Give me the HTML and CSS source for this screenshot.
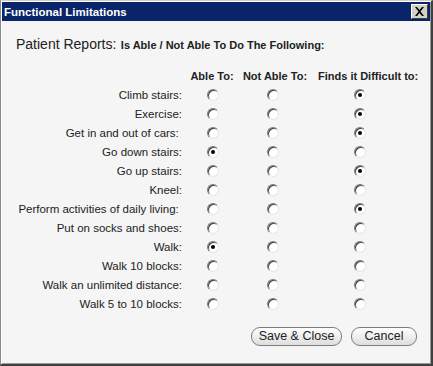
FILE: index.html
```html
<!DOCTYPE html>
<html>
<head>
<meta charset="utf-8">
<link rel="stylesheet" href="styles.css">
</head>
<body>
<div class="window">
  <div class="titlebar">
    <span class="title">Functional Limitations</span>
    <span class="close">
      <svg width="11" height="9" viewBox="0 0 11 9"><path d="M1 0h2l2.5 3 2.5-3h2l-3.5 4.5 3.5 4.5h-2l-2.5-3-2.5 3h-2l3.5-4.5z" fill="#000"/></svg>
    </span>
  </div>
  <div class="content">
    <div class="heading"><span class="big">Patient Reports:</span> <span class="small">Is Able / Not Able To Do The Following:</span></div>
    <div class="grid">
      <div></div>
      <div class="hd h1">Able To:</div>
      <div class="hd h2">Not Able To:</div>
      <div class="hd h3">Finds it Difficult to:</div>

      <div class="lbl">Climb stairs:</div>
      <div class="c"><input type="radio" name="r1"></div><div class="c"><input type="radio" name="r1"></div><div class="c"><input type="radio" name="r1" checked></div>

      <div class="lbl">Exercise:</div>
      <div class="c"><input type="radio" name="r2"></div><div class="c"><input type="radio" name="r2"></div><div class="c"><input type="radio" name="r2" checked></div>

      <div class="lbl">Get in and out of cars:&nbsp;</div>
      <div class="c"><input type="radio" name="r3"></div><div class="c"><input type="radio" name="r3"></div><div class="c"><input type="radio" name="r3" checked></div>

      <div class="lbl">Go down stairs:</div>
      <div class="c"><input type="radio" name="r4" checked></div><div class="c"><input type="radio" name="r4"></div><div class="c"><input type="radio" name="r4"></div>

      <div class="lbl">Go up stairs:</div>
      <div class="c"><input type="radio" name="r5"></div><div class="c"><input type="radio" name="r5"></div><div class="c"><input type="radio" name="r5" checked></div>

      <div class="lbl">Kneel:</div>
      <div class="c"><input type="radio" name="r6"></div><div class="c"><input type="radio" name="r6"></div><div class="c"><input type="radio" name="r6"></div>

      <div class="lbl">Perform activities of daily living:&nbsp;</div>
      <div class="c"><input type="radio" name="r7"></div><div class="c"><input type="radio" name="r7"></div><div class="c"><input type="radio" name="r7" checked></div>

      <div class="lbl">Put on socks and shoes:</div>
      <div class="c"><input type="radio" name="r8"></div><div class="c"><input type="radio" name="r8"></div><div class="c"><input type="radio" name="r8"></div>

      <div class="lbl">Walk:</div>
      <div class="c"><input type="radio" name="r9" checked></div><div class="c"><input type="radio" name="r9"></div><div class="c"><input type="radio" name="r9"></div>

      <div class="lbl">Walk 10 blocks:</div>
      <div class="c"><input type="radio" name="r10"></div><div class="c"><input type="radio" name="r10"></div><div class="c"><input type="radio" name="r10"></div>

      <div class="lbl">Walk an unlimited distance:</div>
      <div class="c"><input type="radio" name="r11"></div><div class="c"><input type="radio" name="r11"></div><div class="c"><input type="radio" name="r11"></div>

      <div class="lbl">Walk 5 to 10 blocks:</div>
      <div class="c"><input type="radio" name="r12"></div><div class="c"><input type="radio" name="r12"></div><div class="c"><input type="radio" name="r12"></div>
    </div>
    <div class="buttons">
      <button class="btn save">Save &amp; Close</button>
      <button class="btn cancel">Cancel</button>
    </div>
  </div>
</div>
</body>
</html>
```
FILE: styles.css
```css
html, body {
  margin: 0;
  padding: 0;
  background: #ffffff;
}
.window {
  box-sizing: border-box;
  width: 433px;
  height: 366px;
  background: #f5f5f5;
  border-style: solid;
  border-width: 1px 2px 2px 1px;
  border-color: #d4d0c8 #404040 #404040 #8a8a8a;
  box-shadow: inset 1px 1px 0 #ffffff, inset -1px -1px 0 #9a9a9a;
  font-family: "Liberation Sans", Arial, sans-serif;
  color: #1a1a1a;
  display: flex;
  flex-direction: column;
}
.titlebar {
  margin: 1px 1px 0 1px;
  height: 19px;
  background: #0a246a;
  display: flex;
  align-items: center;
  justify-content: space-between;
  padding: 0 2px 0 2px;
}
.title {
  color: #ffffff;
  font-weight: bold;
  font-size: 11.5px;
}
.close {
  box-sizing: border-box;
  width: 17px;
  height: 15px;
  background: #d4d0c8;
  border-style: solid;
  border-width: 1px;
  border-color: #ffffff #404040 #404040 #ffffff;
  display: flex;
  align-items: center;
  justify-content: center;
}
.close svg { display: block; }
.content {
  padding: 14px 0 0 0;
}
.heading {
  padding-left: 15px;
  height: 18px;
  line-height: 18px;
  white-space: nowrap;
}
.heading .big {
  font-size: 14px;
  color: #222;
}
.heading .small {
  font-size: 11px;
  font-weight: bold;
  color: #222;
}
.grid {
  margin-top: 13px;
  display: grid;
  grid-template-columns: 181px 62px 58px 116px;
  grid-auto-rows: 19px;
  align-items: center;
}
.hd {
  font-size: 11px;
  font-weight: bold;
  color: #222;
  white-space: nowrap;
}
.h1 { justify-self: center; margin-left: -2px; }
.h2 { justify-self: center; margin-left: 4px; }
.h3 { justify-self: start; margin-left: 16px; }
.lbl {
  font-size: 11.5px;
  text-align: right;
  white-space: nowrap;
  color: #222;
}
.c {
  display: flex;
  justify-content: center;
}
input[type="radio"] {
  appearance: none;
  -webkit-appearance: none;
  box-sizing: border-box;
  margin: 0;
  width: 12px;
  height: 12px;
  border-radius: 50%;
  border: 1px solid;
  border-color: #7a7a7a #e6e6e6 #e6e6e6 #7a7a7a;
  box-shadow: inset 1px 1px 0 #404040;
  background: #ffffff;
  position: relative;
}
input[type="radio"]:checked::after {
  content: "";
  position: absolute;
  left: 3px;
  top: 3px;
  width: 4px;
  height: 4px;
  border-radius: 50%;
  background: #000;
}
.buttons {
  margin-top: 14px;
  display: flex;
  justify-content: flex-end;
  gap: 9px;
  padding-right: 14px;
}
.btn {
  box-sizing: border-box;
  height: 19px;
  padding: 0;
  border: 1px solid #7c7c7c;
  border-radius: 9px;
  background: linear-gradient(#ffffff, #ececec 55%, #dedede);
  font-family: "Liberation Sans", Arial, sans-serif;
  font-size: 12.5px;
  color: #222;
  line-height: 17px;
}
.save { width: 91px; }
.cancel { width: 66px; }
```
